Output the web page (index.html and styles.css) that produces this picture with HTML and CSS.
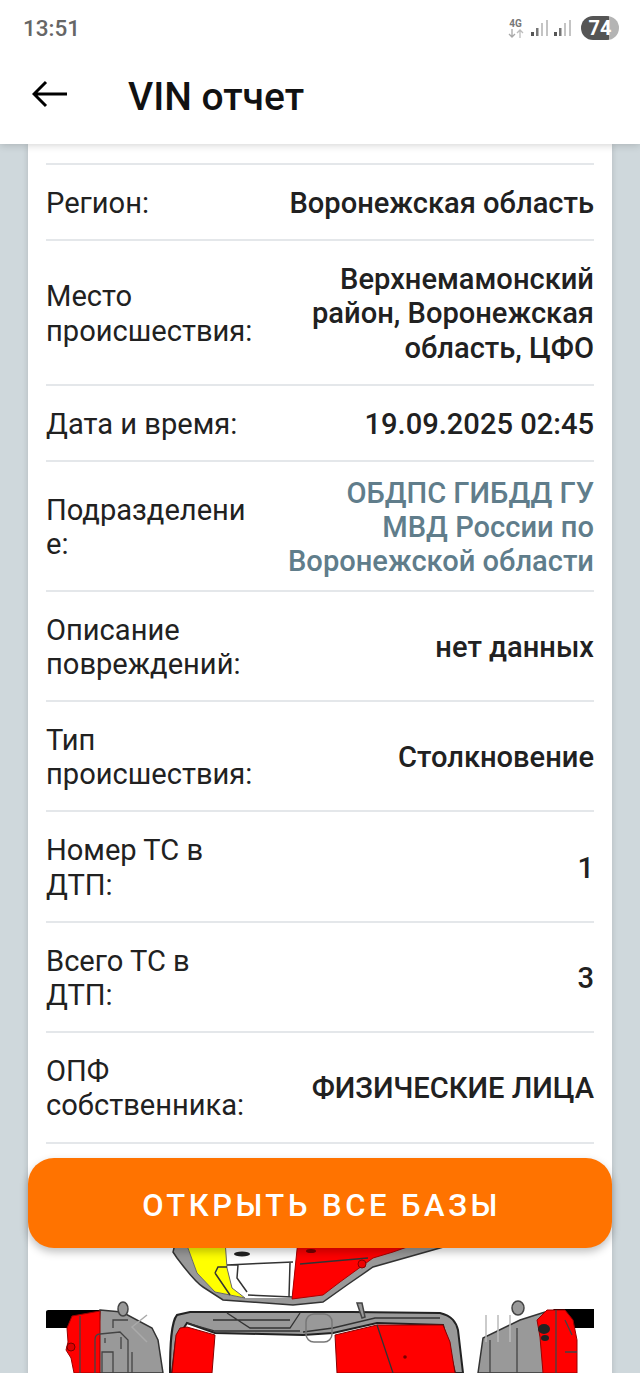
FILE: index.html

```html
<!DOCTYPE html>
<html>
<head>
	<meta charset="utf-8">
	<meta name="viewport" content="width=device-width, initial-scale=1">
	<title>VIN отчет</title>
	<link rel="stylesheet" href="styles.css">
</head>
<body>
	<div class="top">
		<div class="status">
			<span class="time">13:51</span>
			<div class="status-icons">
				<div class="net">
					<span class="net-text">4G</span>
					<svg class="net-arrows" width="16" height="9" viewBox="0 0 16 9"><path d="M4 0v8M1 5l3 3 3-3" fill="none" stroke="#a8a8a8" stroke-width="1.3"/><path d="M12 9V1M9 4l3-3 3 3" fill="none" stroke="#bdbdbd" stroke-width="1.3"/></svg>
				</div>
				<svg class="signal" width="18" height="18" viewBox="0 0 18 18"><rect x="0" y="13" width="3" height="4" fill="#555"/><rect x="5" y="9" width="2.5" height="8" fill="#777"/><rect x="10" y="4" width="2" height="13" fill="#c4c4c4"/><rect x="15" y="1" width="2" height="16" fill="#c4c4c4"/></svg>
				<svg class="signal" width="18" height="18" viewBox="0 0 18 18"><rect x="0" y="13" width="3" height="4" fill="#555"/><rect x="5" y="9" width="2.5" height="8" fill="#777"/><rect x="10" y="4" width="2" height="13" fill="#c4c4c4"/><rect x="15" y="1" width="2" height="16" fill="#c4c4c4"/></svg>
				<div class="battery"><span>74</span></div>
			</div>
		</div>
		<div class="appbar">
			<svg class="back" width="36" height="28" viewBox="0 0 36 28"><path d="M35 14H2M14 2 2 14l12 12" fill="none" stroke="#000" stroke-width="3"/></svg>
			<span class="title">VIN отчет</span>
		</div>
	</div>

	<div class="content">
		<div class="card">
			<div class="row"><div class="label">Регион:</div><div class="value">Воронежская область</div></div>
			<div class="row"><div class="label">Место происшествия:</div><div class="value">Верхнемамонский район, Воронежская область, ЦФО</div></div>
			<div class="row"><div class="label">Дата и время:</div><div class="value wide">19.09.2025 02:45</div></div>
			<div class="row tight"><div class="label">Подразделение:</div><div class="value link">ОБДПС ГИБДД ГУ МВД России по Воронежской области</div></div>
			<div class="row"><div class="label">Описание повреждений:</div><div class="value">нет данных</div></div>
			<div class="row"><div class="label">Тип происшествия:</div><div class="value">Столкновение</div></div>
			<div class="row"><div class="label">Номер ТС в ДТП:</div><div class="value">1</div></div>
			<div class="row"><div class="label">Всего ТС в ДТП:</div><div class="value">3</div></div>
			<div class="row"><div class="label">ОПФ собственника:</div><div class="value wide">ФИЗИЧЕСКИЕ ЛИЦА</div></div>

			<svg class="car" width="548" height="229" viewBox="46 1144 548 229">
				<!-- front view, top part is under the button -->
				<path d="M176 1240 173 1252 177 1258C186 1270 195 1282 203 1287L223 1300 293 1305 323 1302 347 1285 373 1267 447 1246Z" fill="#999" stroke="#333" stroke-width="1.5"/>
				<path d="M185 1240 197 1273 215 1292 245 1298H292L298 1240Z" fill="#fff"/>
				<path d="M185 1240 197 1273 215 1292 245 1298 232 1288 227 1268 225 1240Z" fill="#ff0" stroke="#666" stroke-width="1"/>
				<path d="M298 1240 292 1299 323 1295 340 1282 373 1258 393 1252 427 1240Z" fill="#f00" stroke="#a00" stroke-width="1"/>
				<path d="M227 1265 293 1262M238 1265 237 1278 247 1292M215 1273 218 1267H227M215 1273 230 1295M248 1295 292 1297M290 1263 289 1297M300 1264 368 1258" fill="none" stroke="#333" stroke-width="1.5"/>
				<ellipse cx="242" cy="1254" rx="8" ry="2.5" fill="#222"/>
				<ellipse cx="311" cy="1251" rx="5" ry="2" fill="#700"/>
				<circle cx="362" cy="1264" r="4" fill="#e00" stroke="#800"/>
				<!-- left side -->
				<path d="M46 1312C46 1310 48 1310 50 1310H100V1328H46Z" fill="#000"/>
				<path d="M100 1310 122 1312 152 1328 158 1340 163 1373H96Z" fill="#999" stroke="#333" stroke-width="1.5"/>
				<ellipse cx="123" cy="1309" rx="5" ry="7" fill="#999" stroke="#444" stroke-width="1.5"/>
				<path d="M72 1316 100 1311V1373H74L71 1358 66 1350 68 1342 67 1328Z" fill="#f00" stroke="#900" stroke-width="1"/>
				<path d="M80 1316V1373M95 1373V1340Q95 1334 100 1334L120 1332 128 1340V1373M102 1373V1352H113V1373M105 1338V1343M121 1337V1349M132 1352V1373M113 1328V1320H128" fill="none" stroke="#444" stroke-width="1.3"/>
				<circle cx="71" cy="1347" r="4" fill="#d00" stroke="#700"/>
				<!-- rear view -->
				<path d="M170 1373C170 1345 171 1322 177 1315L190 1312H353L440 1313C452 1316 456 1322 458 1330L463 1373H455L443 1325 377 1323 333 1333 303 1335 215 1333 187 1323 176 1340 172 1373Z" fill="#999" stroke="#222" stroke-width="2"/>
				<path d="M172 1373 176 1335 180 1328 187 1327 215 1335 212 1373Z" fill="#f00" stroke="#800" stroke-width="1"/>
				<path d="M337 1373 335 1335 377 1325 443 1325 450 1342 455 1373Z" fill="#f00" stroke="#800" stroke-width="1"/>
				<path d="M213 1320H290M227 1313 250 1328H290L300 1313M187 1323 215 1331H300M303 1332 333 1328 375 1318H440M377 1325 393 1373" fill="none" stroke="#333" stroke-width="1.3"/>
				<path d="M357 1303 362 1303 365 1317 362 1318Z" fill="#999" stroke="#444" stroke-width="1.5"/>
				<circle cx="405" cy="1357" r="1.8" fill="#700"/>
				<!-- right side -->
				<path d="M478 1373 483 1338 520 1320 545 1312H565V1373Z" fill="#999" stroke="#333" stroke-width="1.5"/>
				<path d="M553 1309H594V1328H570Z" fill="#000"/>
				<path d="M537 1320 547 1310 565 1310 573 1320 577 1340V1373H543L540 1337Z" fill="#f00" stroke="#900" stroke-width="1"/>
				<path d="M517 1328V1373M490 1340V1373M556 1310V1373M565 1352H577M565 1320 572 1335" fill="none" stroke="#444" stroke-width="1.3"/>
				<ellipse cx="544" cy="1329" rx="6" ry="5" fill="#222"/>
				<ellipse cx="545" cy="1338" rx="4" ry="3" fill="#222"/>
				<ellipse cx="518" cy="1308" rx="6" ry="7" fill="#999" stroke="#444" stroke-width="1.5"/>
			</svg>
		</div>
	</div>

	<button class="open-all">ОТКРЫТЬ ВСЕ БАЗЫ</button>

	<svg class="gestures" width="640" height="100" viewBox="0 1273 640 100">
		<path d="M147 1315 132 1327 147 1342" fill="none" stroke="#aaa" stroke-width="1.5"/>
		<rect x="306" y="1314" width="26" height="28" rx="8" fill="none" stroke="#777" stroke-width="1.5"/>
		<path d="M486 1315V1342M498 1315V1342M510 1315V1342" fill="none" stroke="#bbb" stroke-width="1.5"/>
	</svg>
</body>
</html>
```

FILE: styles.css

```css
html, body
{
	margin: 0;
	padding: 0;
	height: 100%;
	overflow: hidden;
}
body
{
	position: relative;
	display: flex;
	flex-direction: column;
	background-color: #cfd8dc;
	font-family: Roboto, "Noto Sans", sans-serif;
	color: #212121;
}
.top
{
	position: relative;
	z-index: 2;
	flex: none;
	height: 144px;
	background-color: #fff;
	box-shadow: 0 1px 8px rgba(0, 0, 0, 0.18);
}
.status
{
	display: flex;
	justify-content: space-between;
	align-items: center;
	height: 56px;
	padding: 0 21px 0 23px;
}
.time
{
	font-size: 22.5px;
	font-weight: 500;
	color: #666;
}
.status-icons
{
	display: flex;
	align-items: center;
	gap: 5px;
}
.net
{
	display: flex;
	flex-direction: column;
	align-items: center;
	width: 17px;
	margin-right: 2px;
}
.net-text
{
	font-size: 10px;
	line-height: 10px;
	font-weight: 700;
	color: #777;
}
.net-arrows
{
	display: block;
}
.battery
{
	display: flex;
	justify-content: center;
	align-items: center;
	width: 38px;
	height: 24px;
	margin-left: 4px;
	border-radius: 12px;
	background: linear-gradient(90deg, #555 74%, #b4b4b4 74%);
	color: #fff;
	font-size: 20px;
	font-weight: 700;
}
.appbar
{
	display: flex;
	align-items: center;
	height: 78px;
	padding: 0 0 0 32px;
}
.back
{
	flex: none;
	margin-top: -2px;
}
.title
{
	margin-left: 60px;
	padding-top: 3px;
	font-size: 39px;
	font-weight: 500;
	color: #111;
}
.content
{
	flex: 1;
	overflow: hidden;
	padding: 0 28px;
}
.card
{
	height: 1300px;
	padding: 19px 18px 0;
	background-color: #fff;
	box-shadow: 0 0 6px rgba(0, 0, 0, 0.15);
}
.row
{
	display: flex;
	justify-content: space-between;
	align-items: center;
	padding: 21px 0 19px;
	border-top: 2px solid #e4e7ea;
	font-size: 29.1px;
	line-height: 34.2px;
}
.row.tight
{
	padding: 14px 0 11px;
}
.row:last-of-type
{
	border-bottom: 2px solid #e4e7ea;
}
.label
{
	flex: none;
	width: 210px;
	overflow-wrap: anywhere;
}
.value
{
	width: 310px;
	font-weight: 500;
	text-align: right;
}
.value.wide
{
	width: 335px;
}
.value.link
{
	color: #607d8b;
}
.car
{
	display: block;
	filter: blur(0.4px);
}
.open-all
{
	position: absolute;
	left: 28px;
	top: 1158px;
	z-index: 3;
	width: 584px;
	height: 90px;
	padding: 4px 0 0 3px;
	border: none;
	border-radius: 26px;
	background-color: #ff7300;
	box-shadow: 0 4px 8px rgba(0, 0, 0, 0.25);
	color: #fff;
	font-family: Roboto, sans-serif;
	font-size: 31px;
	font-weight: 500;
	letter-spacing: 3.5px;
}
.gestures
{
	position: absolute;
	left: 0;
	bottom: 0;
	z-index: 4;
}
```
